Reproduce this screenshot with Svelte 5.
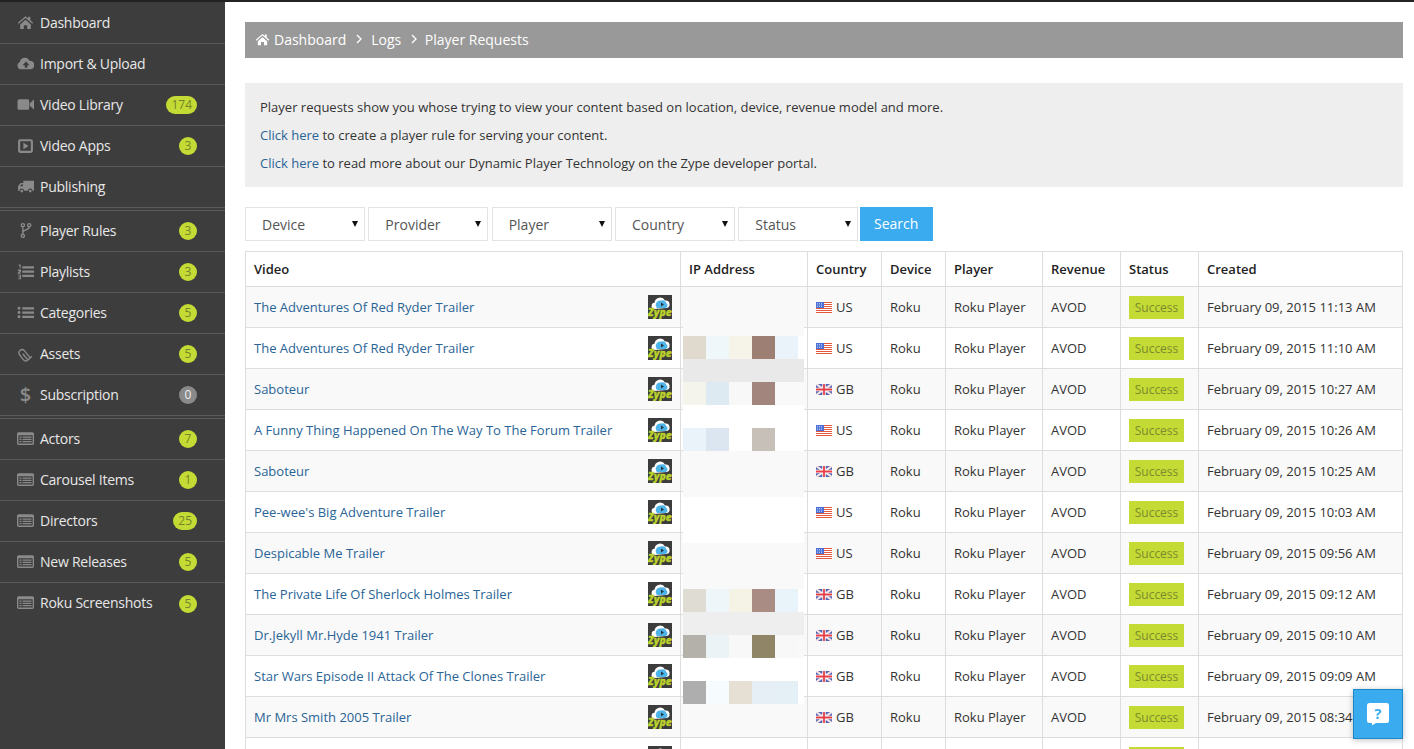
<script lang="ts">
  const icons = {
    home: { d: "M8 2 .8 8.2l.8 1L8 3.8l6.4 5.4.8-1-2.7-2.3V2.6h-2v1.7ZM3 9.8 8 5.5l5 4.3V14H9.6v-3.4H6.4V14H3Z" },
    upload: { d: "M4 13.5A3.5 3.5 0 0 1 2.8 6.7 4.6 4.6 0 0 1 11.6 5.4 4.1 4.1 0 0 1 13 13.5ZM8.5 6 5.2 9.6h2.1V12h2.4V9.6h2.1Z" },
    video: { d: "M.5 4.5A1.5 1.5 0 0 1 2 3h8a1.5 1.5 0 0 1 1.5 1.5v7A1.5 1.5 0 0 1 10 13H2A1.5 1.5 0 0 1 .5 11.5ZM12 7l3.5-3.5h.5v9h-.5L12 9Z" },
    play: { d: "M3 2h10a2 2 0 0 1 2 2v9a2 2 0 0 1-2 2H3a2 2 0 0 1-2-2V4a2 2 0 0 1 2-2ZM3 4v9h10V4ZM6 5.5l5 3-5 3Z" },
    truck: { d: "M6 2.5h10v9.5h-1.4a2.1 2.1 0 0 0-4.2 0H6.6a2.1 2.1 0 0 0-4.2 0H1V7.5l2.5-2.8H6ZM4.5 5.8 2.6 7.8h2.9v-2ZM4.5 11a1.3 1.3 0 1 1 0 2.6 1.3 1.3 0 0 1 0-2.6ZM12.5 11a1.3 1.3 0 1 1 0 2.6 1.3 1.3 0 0 1 0-2.6Z" },
    fork: { stroke: true, d: "M5.5 4.5v7M11.5 4.5c0 3.5-6 2.5-6 5.5M7 3a1.5 1.5 0 1 1-3 0 1.5 1.5 0 1 1 3 0ZM13 3a1.5 1.5 0 1 1-3 0 1.5 1.5 0 1 1 3 0ZM7 13a1.5 1.5 0 1 1-3 0 1.5 1.5 0 1 1 3 0Z" },
    listol: { d: "M5 3h11v2.2H5ZM5 7h11v2.2H5ZM5 11h11v2.2H5ZM1.5 1.5h2v3.4h-1v-2.4h-1ZM.8 6.2h3v2l-1.6 1h1.6v.9h-3V8.7l1.8-1.1H.8ZM.8 11h3v4.4h-3v-.8h2v-1h-1.4v-.8h1.4v-1h-2Z" },
    list: { d: "M5 3h11v2.2H5ZM5 7h11v2.2H5ZM5 11h11v2.2H5ZM.5 4.1a1.4 1.4 0 1 1 2.8 0 1.4 1.4 0 0 1-2.8 0ZM.5 8.1a1.4 1.4 0 1 1 2.8 0 1.4 1.4 0 0 1-2.8 0ZM.5 12.1a1.4 1.4 0 1 1 2.8 0 1.4 1.4 0 0 1-2.8 0Z" },
    clip: { stroke: true, d: "M14 10.5 10 14.3a2.6 2.6 0 0 1-3.7-.1L2.6 9.4a3.2 3.2 0 0 1 .2-4.3l.2-.2a2.6 2.6 0 0 1 3.7.2l5 6a1.5 1.5 0 0 1-2.2 2L5.4 8.2" },
    listalt: { d: "M1.5 2h13A1.5 1.5 0 0 1 16 3.5v9a1.5 1.5 0 0 1-1.5 1.5h-13A1.5 1.5 0 0 1 0 12.5v-9A1.5 1.5 0 0 1 1.5 2ZM1.3 5v7.7h13.4V5ZM2.3 6h2v1.2h-2ZM5.2 6h8.5v1.2H5.2ZM2.3 8.2h2v1.2h-2ZM5.2 8.2h8.5v1.2H5.2ZM2.3 10.4h2v1.2h-2ZM5.2 10.4h8.5v1.2H5.2Z" },
  };

  const navGroups = [
    [
      { label: "Dashboard", icon: "home" },
      { label: "Import & Upload", icon: "upload" },
      { label: "Video Library", icon: "video", count: 174 },
      { label: "Video Apps", icon: "play", count: 3 },
      { label: "Publishing", icon: "truck" },
    ],
    [
      { label: "Player Rules", icon: "fork", count: 3 },
      { label: "Playlists", icon: "listol", count: 3 },
      { label: "Categories", icon: "list", count: 5 },
      { label: "Assets", icon: "clip", count: 5 },
      { label: "Subscription", icon: "dollar", count: 0 },
    ],
    [
      { label: "Actors", icon: "listalt", count: 7 },
      { label: "Carousel Items", icon: "listalt", count: 1 },
      { label: "Directors", icon: "listalt", count: 25 },
      { label: "New Releases", icon: "listalt", count: 5 },
      { label: "Roku Screenshots", icon: "listalt", count: 5 },
    ],
  ];

  const filters = ["Device", "Provider", "Player", "Country", "Status"];
  const columns = ["Video", "IP Address", "Country", "Device", "Player", "Revenue", "Status", "Created"];

  const requests = [
    ["The Adventures Of Red Ryder Trailer", "US", "11:13 AM"],
    ["The Adventures Of Red Ryder Trailer", "US", "11:10 AM"],
    ["Saboteur", "GB", "10:27 AM"],
    ["A Funny Thing Happened On The Way To The Forum Trailer", "US", "10:26 AM"],
    ["Saboteur", "GB", "10:25 AM"],
    ["Pee-wee's Big Adventure Trailer", "US", "10:03 AM"],
    ["Despicable Me Trailer", "US", "09:56 AM"],
    ["The Private Life Of Sherlock Holmes Trailer", "GB", "09:12 AM"],
    ["Dr.Jekyll Mr.Hyde 1941 Trailer", "GB", "09:10 AM"],
    ["Star Wars Episode II Attack Of The Clones Trailer", "GB", "09:09 AM"],
    ["Mr Mrs Smith 2005 Trailer", "GB", "08:34 AM"],
  ];

  // censored IP column, one strip per 23px
  const W = "#ffffff";
  const F = "#f9f9f9";
  const mosaic = [
    { bg: F },
    { bg: W, tiles: ["#e0d9cd", "#f0f7fb", "#f6f4e8", "#9d8073", "#eaf3fa"] },
    { bg: "#e9e9e9" },
    { bg: F, tiles: ["#f5f4ec", "#deeaf2", "#f8f8f8", "#a2867d", "#f9f9f9"] },
    { bg: W },
    { bg: W, tiles: ["#eaf3fa", "#dbe6f0", "#ffffff", "#c6c0b8", "#ffffff"] },
    { bg: F },
    { bg: F },
    { bg: W },
    { bg: W },
    { bg: F },
    { bg: F },
    { bg: W, tiles: ["#dfddd3", "#eef6fa", "#f5f3e6", "#a98d85", "#e9f4fa"] },
    { bg: "#eeeeee" },
    { bg: F, tiles: ["#b4b0aa", "#ecf3f6", "#f8f8f8", "#908566", "#f8f8f8"] },
    { bg: W },
    { bg: W, tiles: ["#aeaeae", "#f6fbfe", "#e6dfd3", "#e5eff5", "#e5f0f6"] },
  ];
</script>

{#snippet zype()}
  <svg class="zype" viewBox="0 0 24 24" aria-hidden="true">
    <rect width="24" height="24" fill="#3c3c3c" />
    <path d="M6 14a3.2 3.2 0 0 1 .5-6.3A5.6 5.6 0 0 1 17 5.5a3.8 3.8 0 0 1 1.5 7.5Z" fill="#ffffff" />
    <path d="M9 13a4.5 4.5 0 0 1 4-7.5 4 4 0 0 1 5.2 2.4 2.9 2.9 0 0 1-.5 5.1Z" fill="#4db4ea" />
    <path d="M13 7.5l3 2-3 2Z" fill="#26343c" />
    <text x="12" y="21" class="zype-text">Zype</text>
  </svg>
{/snippet}

{#snippet flag(code)}
  {#if code === "US"}
    <svg class="flag" viewBox="0 0 16 11" aria-hidden="true">
      <rect width="16" height="11" fill="#fff" />
      <path d="M0 .5h16M0 2.5h16M0 4.5h16M0 6.5h16M0 8.5h16M0 10.5h16" stroke="#e4573f" stroke-width="1" />
      <rect width="8" height="6" fill="#4a6fd6" />
      <path d="M1 1.5h6M1 3h6M1 4.5h6" stroke="#c8d4f5" stroke-width=".8" stroke-dasharray="1 1" />
    </svg>
  {:else}
    <svg class="flag" viewBox="0 0 16 11" aria-hidden="true">
      <rect width="16" height="11" fill="#5263b0" />
      <path d="M0 0l16 11M16 0 0 11" stroke="#f2e4e6" stroke-width="2.2" />
      <path d="M8 0v11M0 5.5h16" stroke="#fff" stroke-width="3.4" />
      <path d="M8 0v11M0 5.5h16" stroke="#e8404a" stroke-width="1.8" />
    </svg>
  {/if}
{/snippet}

<div class="topline"></div>
<div class="shell">
  <nav class="sidebar">
    {#each navGroups as group}
      <ul class="group">
        {#each group as item}
          <li class="item">
            {#if item.icon === "dollar"}
              <span class="icon dollar">$</span>
            {:else}
              <svg class="icon" viewBox="0 0 16 16" aria-hidden="true">
                <path
                  d={icons[item.icon].d}
                  fill={icons[item.icon].stroke ? "none" : "#8a8a8a"}
                  fill-rule="evenodd"
                  stroke={icons[item.icon].stroke ? "#8a8a8a" : "none"}
                  stroke-width="1.3"
                />
              </svg>
            {/if}
            <span class="label">{item.label}</span>
            {#if item.count !== undefined}
              <span class="count" class:zero={item.count === 0}>{item.count}</span>
            {/if}
          </li>
        {/each}
      </ul>
    {/each}
  </nav>

  <main class="content">
    <div class="breadcrumb">
      <svg class="crumb-home" viewBox="0 0 16 16" aria-hidden="true">
        <path d={icons.home.d} fill="#fff" fill-rule="evenodd" />
      </svg>
      <span class="home-label">Dashboard</span>
      <svg class="chev" viewBox="0 0 6 10" aria-hidden="true"><path d="M1 1l4 4-4 4" /></svg>
      <span>Logs</span>
      <svg class="chev last" viewBox="0 0 6 10" aria-hidden="true"><path d="M1 1l4 4-4 4" /></svg>
      <span>Player Requests</span>
    </div>

    <div class="intro">
      <p>Player requests show you whose trying to view your content based on location, device, revenue model and more.</p>
      <p><a href="#rule">Click here</a> to create a player rule for serving your content.</p>
      <p><a href="#docs">Click here</a> to read more about our Dynamic Player Technology on the Zype developer portal.</p>
    </div>

    <form class="filters">
      {#each filters as name}
        <div class="select-wrap">
          <select aria-label={name}><option>{name}</option></select>
        </div>
      {/each}
      <button type="button" class="search">Search</button>
    </form>

    <div class="table-wrap">
      <table>
        <colgroup>
          <col style="width:435px" /><col style="width:127px" /><col style="width:74px" /><col style="width:64px" />
          <col style="width:97px" /><col style="width:78px" /><col style="width:78px" /><col style="width:204px" />
        </colgroup>
        <thead>
          <tr>
            {#each columns as col}<th>{col}</th>{/each}
          </tr>
        </thead>
        <tbody>
          {#each requests as [title, country, time]}
            <tr>
              <td>
                <div class="video-cell">
                  <a href="#video">{title}</a>
                  {@render zype()}
                </div>
              </td>
              <td></td>
              <td>
                <div class="country-cell">{@render flag(country)}{country}</div>
              </td>
              <td>Roku</td>
              <td>Roku Player</td>
              <td>AVOD</td>
              <td><span class="status">Success</span></td>
              <td>February 09, 2015 {time}</td>
            </tr>
          {/each}
          <tr>
            <td><div class="video-cell"><span></span>{@render zype()}</div></td>
            <td></td><td></td><td></td><td></td><td></td>
            <td><span class="status">Success</span></td>
            <td></td>
          </tr>
        </tbody>
      </table>

      <div class="censor">
        {#each mosaic as strip}
          <div class="strip" style="background:{strip.bg}">
            {#each strip.tiles ?? [] as tile}
              <i style="background:{tile}"></i>
            {/each}
          </div>
        {/each}
      </div>
    </div>
  </main>
</div>

<button type="button" class="help" aria-label="Help">
  <svg viewBox="0 0 22 22" aria-hidden="true">
    <path d="M2.5 0h17A2.5 2.5 0 0 1 22 2.5v15a2.5 2.5 0 0 1-2.5 2.5H9l-4 2.5V20H2.5A2.5 2.5 0 0 1 0 17.5v-15A2.5 2.5 0 0 1 2.5 0Z" fill="#fff" />
    <text x="11" y="15.5" class="help-mark">?</text>
  </svg>
</button>

<style>
  :global(body) {
    margin: 0;
    overflow: hidden;
    background: #fff;
    color: #333;
    font-family: "Open Sans", sans-serif;
    font-size: 13px;
  }

  .topline {
    height: 2px;
    background: #222;
  }

  .shell {
    display: flex;
    height: 747px;
    overflow: hidden;
  }

  .sidebar {
    flex: 0 0 225px;
    padding-top: 1px;
    background: #3d3d3d;
    box-sizing: border-box;
  }

  .group {
    margin: 0;
    padding: 0 0 2px;
    list-style: none;
    border-bottom: 1px solid #5a5a5a;
  }

  .group:last-child {
    border-bottom: 0;
  }

  .group:last-child .item:last-child {
    border-bottom: 0;
  }

  .item {
    display: flex;
    align-items: center;
    box-sizing: border-box;
    height: 41px;
    padding: 0 28px 0 17px;
    border-bottom: 1px solid #5a5a5a;
    color: #e8e8e8;
    font-size: 14px;
    letter-spacing: -0.25px;
  }

  .icon {
    flex: 0 0 17px;
    width: 17px;
    height: 17px;
    margin: 0 6px 2px 0;
  }

  .dollar {
    color: #8a8a8a;
    font-size: 20px;
    font-weight: 600;
    line-height: 17px;
    text-align: center;
    letter-spacing: 0;
  }

  .label {
    flex: 1;
    margin-bottom: 2px;
    white-space: nowrap;
  }

  .count {
    box-sizing: border-box;
    min-width: 18px;
    height: 18px;
    padding: 0 5px;
    border-radius: 9px;
    background: #c3db34;
    color: #75842a;
    font-size: 12px;
    line-height: 18px;
    text-align: center;
    letter-spacing: 0;
  }

  .count.zero {
    background: #8a8a8a;
    color: #eee;
  }

  .content {
    flex: 1;
    min-width: 0;
    padding: 20px 11px 0 20px;
  }

  .breadcrumb {
    display: flex;
    align-items: center;
    box-sizing: border-box;
    height: 36px;
    padding: 0 0 2px 10px;
    background: #999;
    color: #fff;
    font-size: 14px;
  }

  .crumb-home {
    width: 15px;
    height: 15px;
    margin-right: 4px;
  }

  .chev {
    width: 6px;
    height: 10px;
    margin: 0 9.5px;
    fill: none;
    stroke: #fff;
    stroke-width: 1.3;
  }

  .chev.last {
    margin-right: 8px;
  }

  .intro {
    margin-top: 25px;
    padding: 10px 15px;
    background: #eee;
    color: #333;
  }

  .intro p {
    margin: 0;
    line-height: 28px;
  }

  a {
    color: #2a6496;
    text-decoration: none;
  }

  .filters {
    display: flex;
    gap: 3.33px;
    margin-top: 20px;
  }

  .select-wrap {
    position: relative;
    width: 120px;
    height: 34px;
  }

  .select-wrap::after {
    content: "";
    position: absolute;
    top: 14px;
    right: 7px;
    border-top: 6px solid #111;
    border-left: 3.5px solid transparent;
    border-right: 3.5px solid transparent;
  }

  select {
    width: 100%;
    height: 100%;
    padding: 0 0 0 16px;
    border: 1px solid #e3e3e3;
    background: #fff;
    color: #555;
    font: 14px "Open Sans", sans-serif;
    appearance: none;
    box-sizing: border-box;
  }

  .search {
    width: 73px;
    height: 34px;
    margin-left: -2px;
    padding: 0 0 2px;
    border: 0;
    background: #3aabef;
    color: #fff;
    font: 14px "Open Sans", sans-serif;
  }

  .table-wrap {
    position: relative;
    margin-top: 10px;
  }

  table {
    width: 1157px;
    border-collapse: collapse;
    table-layout: fixed;
  }

  th,
  td {
    box-sizing: border-box;
    padding: 0 8px;
    border: 1px solid #ddd;
    text-align: left;
    white-space: nowrap;
    overflow: hidden;
  }

  th {
    height: 35px;
    color: #222;
    font-weight: 600;
  }

  td {
    height: 41px;
  }

  tbody tr:nth-child(odd) {
    background: #f9f9f9;
  }

  .video-cell {
    display: flex;
    align-items: center;
    justify-content: space-between;
  }

  .zype {
    flex: 0 0 24px;
    width: 24px;
    height: 24px;
  }

  .zype-text {
    fill: #bad12c;
    stroke: #bad12c;
    stroke-width: 0.3;
    font: italic 800 10.5px "Open Sans", sans-serif;
    text-anchor: middle;
  }

  .country-cell {
    display: flex;
    align-items: center;
    gap: 4px;
  }

  .flag {
    width: 16px;
    height: 11px;
    margin-top: 1px;
  }

  .status {
    display: inline-block;
    width: 55px;
    height: 23px;
    background: #c3db34;
    color: #7d8a2f;
    font-size: 12px;
    line-height: 23px;
    text-align: center;
  }

  /* sits over the IP column, same as the blurred strip in the capture */
  .censor {
    position: absolute;
    top: 62px;
    left: 438px;
    width: 121px;
  }

  .strip {
    display: flex;
    height: 23px;
  }

  .strip i {
    width: 23px;
  }

  .help {
    position: fixed;
    top: 689px;
    left: 1353px;
    display: flex;
    align-items: center;
    justify-content: center;
    width: 50px;
    height: 50px;
    padding: 0;
    border: 1px solid #1e87c8;
    background: #3aabef;
    box-shadow: 0 1px 6px rgba(0, 0, 0, 0.25);
  }

  .help svg {
    width: 22px;
    height: 22px;
  }

  .help-mark {
    fill: #3aabef;
    font: 700 15px "Open Sans", sans-serif;
    text-anchor: middle;
  }
</style>
